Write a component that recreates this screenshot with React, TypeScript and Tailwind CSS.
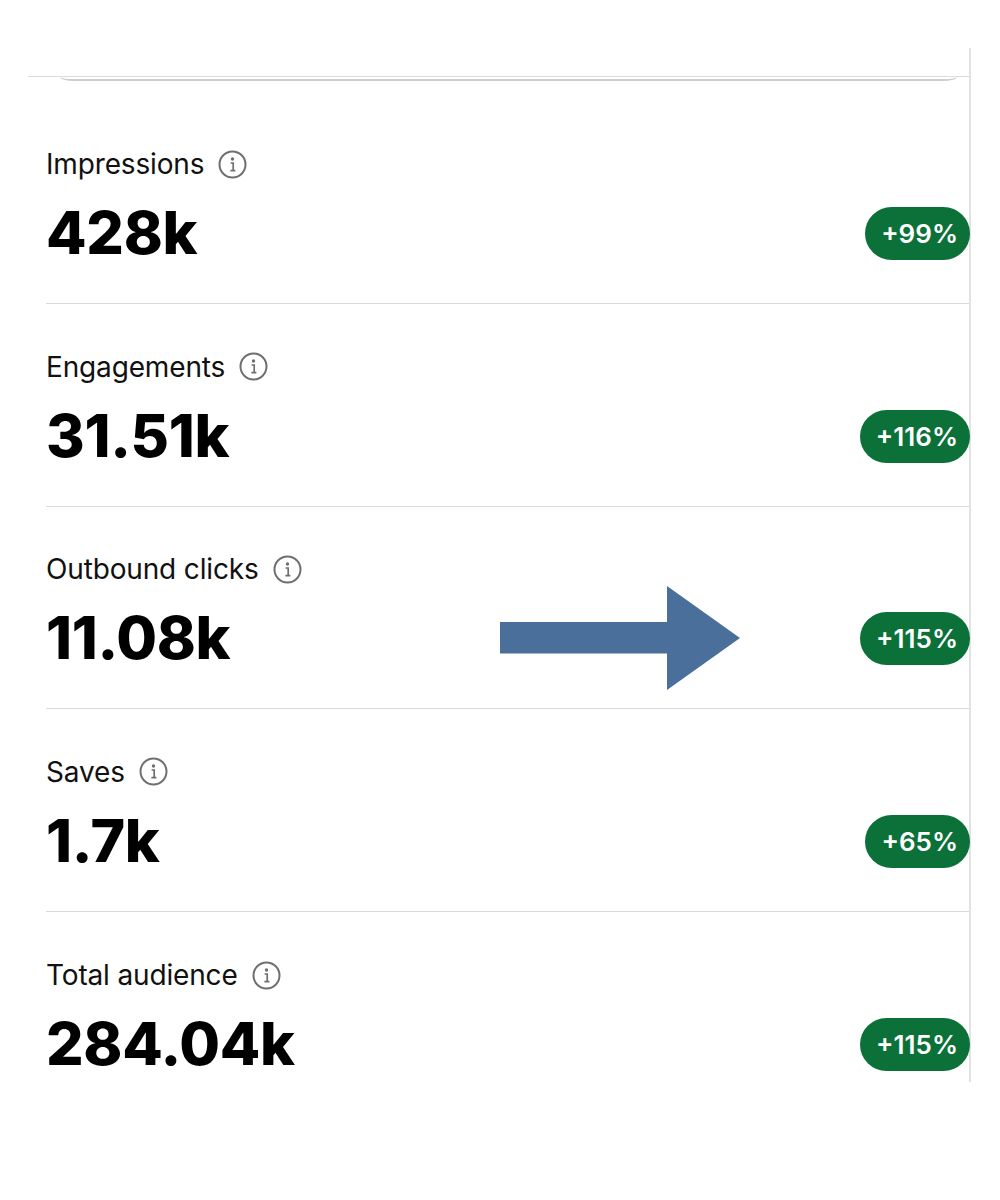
import { useId } from 'react';

type Metric = { label: string; value: string; change: string };

const metrics: Metric[] = [
  { label: 'Impressions', value: '428k', change: '+99%' },
  { label: 'Engagements', value: '31.51k', change: '+116%' },
  { label: 'Outbound clicks', value: '11.08k', change: '+115%' },
  { label: 'Saves', value: '1.7k', change: '+65%' },
  { label: 'Total audience', value: '284.04k', change: '+115%' },
];

function InfoIcon() {
  const id = useId();
  return (
    <svg width="29" height="29" viewBox="0 0 29 29" fill="none" aria-labelledby={id}>
      <title id={id}>Info</title>
      <circle cx="14.5" cy="14.5" r="13" stroke="#6f6f6f" strokeWidth="2" />
      <circle cx="14.5" cy="9" r="1.7" fill="#6f6f6f" />
      <path d="M12.6 13h2.6v7.4M12.4 20.6h5" stroke="#6f6f6f" strokeWidth="1.7" />
    </svg>
  );
}

function MetricRow({ metric, last }: { metric: Metric; last: boolean }) {
  return (
    <div className={`flex items-end justify-between ${last ? 'h-[170.5px] border-b-0' : 'h-[202.5px] border-b border-[#d9d9d5]'}`}>
      <div className={last ? 'pb-[8px]' : 'pb-[40px]'}>
        <div className="flex items-center gap-[14px] text-[28px] leading-[32px] tracking-[-0.15px] text-[#111111]">
          {metric.label}
          <InfoIcon />
        </div>
        <div className="mt-[23px] text-[59px] leading-[60px] font-extrabold tracking-[-0.3px] text-black">{metric.value}</div>
      </div>
      <div className={`-mr-[1px] rounded-full bg-[#0b7139] pr-[12px] pl-[16px] text-[26px] leading-[53px] font-semibold text-white ${last ? 'mb-[11px]' : 'mb-[43px]'}`}>
        {metric.change}
      </div>
    </div>
  );
}

export default function App() {
  return (
    <div className="relative h-[1200px] w-[1000px] bg-white pt-[48px] font-['Inter',sans-serif]">
      <div className="h-[1034px] w-[971px] border-r-2 border-[#e2e2e2]">
        <div className="ml-[28px] h-[29px] border-b border-[#dcdcd8]" />
        <div className="mr-[12px] ml-[60px] h-[4px] rounded-br-[14px_4px] rounded-bl-[14px_4px] border-b-2 border-[#cfcfca]" />
        <div className="pt-[20.5px] pl-[46px]">
          {metrics.map((metric, i) => (
            <MetricRow key={metric.label} metric={metric} last={i === metrics.length - 1} />
          ))}
        </div>
      </div>

      <svg className="absolute top-[586px] left-[500px]" width="240" height="104" viewBox="0 0 240 104" aria-hidden="true">
        <path d="M0 36h167V0l73 52-73 52V67.500H0z" fill="#4a6f9b" />
      </svg>
    </div>
  );
}
